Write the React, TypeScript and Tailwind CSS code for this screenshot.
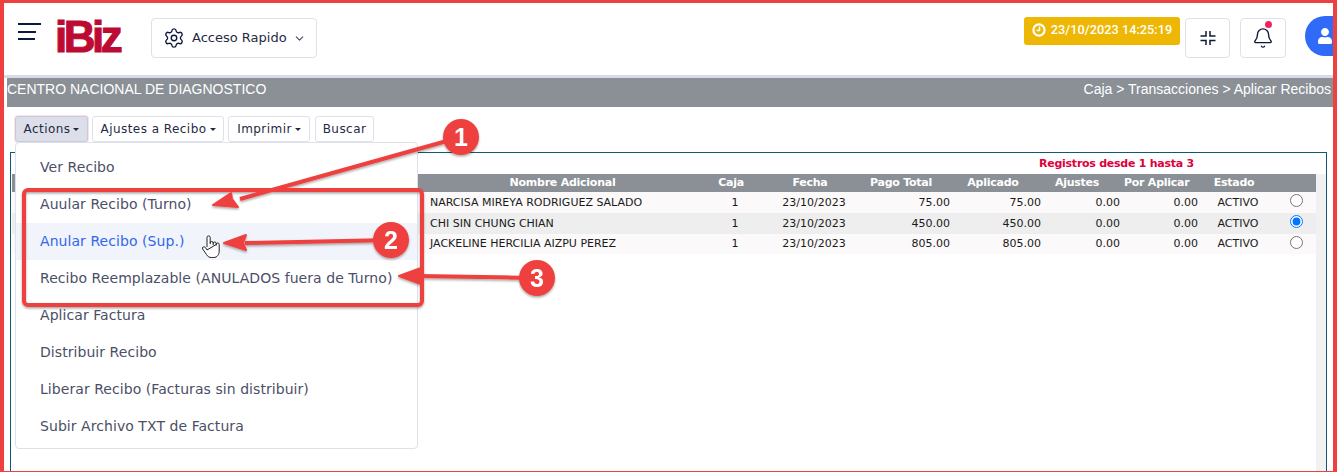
import { Bell, ChevronDown, Settings } from 'lucide-react';
import { FaUser } from 'react-icons/fa';

const menuItems = [
  'Ver Recibo',
  'Auular Recibo (Turno)',
  'Anular Recibo (Sup.)',
  'Recibo Reemplazable (ANULADOS fuera de Turno)',
  'Aplicar Factura',
  'Distribuir Recibo',
  'Liberar Recibo (Facturas sin distribuir)',
  'Subir Archivo TXT de Factura',
];

const rows = [
  { name: 'NARCISA MIREYA RODRIGUEZ SALADO', total: '75.00', checked: false, bg: 'bg-[#fbf9f9]', h: 'h-[21px]' },
  { name: 'CHI SIN CHUNG CHIAN', total: '450.00', checked: true, bg: 'bg-[#eeeeee]', h: 'h-[20px]' },
  { name: 'JACKELINE HERCILIA AIZPU PEREZ', total: '805.00', checked: false, bg: 'bg-[#fbf9f9]', h: 'h-[20px]' },
];

function Caret() {
  return <span className="ml-[3px] inline-block h-0 w-0 border-x-[3px] border-t-[3px] border-x-transparent border-t-[#1f2a44] align-middle" />;
}

function ToolButton({ label, caret, active, width }: { label: string; caret?: boolean; active?: boolean; width: string }) {
  return (
    <div
      className={`flex h-[26px] items-center justify-center rounded-[3px] border text-[12px] tracking-[0.45px] text-[#1f2a44] ${width} ${
        active ? 'border-[#c6cbdc] bg-[#dcdfea] shadow-[0_0_0_1px_#f8e4ea]' : 'border-[#dfe1ea] bg-white'
      }`}
    >
      {label}
      {caret && <Caret />}
    </div>
  );
}

function Annotations() {
  const red = '#ef4040';
  return (
    <svg className="pointer-events-none absolute inset-0" width="1337" height="472" viewBox="0 0 1337 472">
      <defs>
        <filter id="sh" x="-20%" y="-20%" width="140%" height="140%">
          <feDropShadow dx="0" dy="1.5" stdDeviation="1" floodColor="#000" floodOpacity="0.35" />
        </filter>
      </defs>
      <g filter="url(#sh)">
        <rect x="24" y="190" width="398" height="115" rx="4" fill="none" stroke={red} strokeWidth="4" />
        <path d="M461 137 L240 199" stroke={red} strokeWidth="4" />
        <path d="M213 205 L231 193 L232 199 L238 207 Z" fill={red} stroke={red} strokeWidth="2" strokeLinejoin="round" />
        <path d="M391 240 L245 243" stroke={red} strokeWidth="4" />
        <path d="M224 243 L246 235 L243 243 L246 250 Z" fill={red} stroke={red} strokeWidth="2" strokeLinejoin="round" />
        <path d="M537 278 L418 276" stroke={red} strokeWidth="4" />
        <path d="M399 276 L421 268 L418 276 L421 284 Z" fill={red} stroke={red} strokeWidth="2" strokeLinejoin="round" />
        <circle cx="461" cy="137" r="18" fill={red} />
        <circle cx="391" cy="240" r="18" fill={red} />
        <circle cx="537" cy="278" r="18" fill={red} />
        <text x="461" y="146" textAnchor="middle" fontFamily="Liberation Sans" fontWeight="700" fontSize="25" fill="#fff">1</text>
        <text x="391" y="249" textAnchor="middle" fontFamily="Liberation Sans" fontWeight="700" fontSize="25" fill="#fff">2</text>
        <text x="537" y="287" textAnchor="middle" fontFamily="Liberation Sans" fontWeight="700" fontSize="25" fill="#fff">3</text>
      </g>
      {/* hand cursor */}
      <path
        d="M207 247 V237.5 a1.6 1.6 0 0 1 3.2 0 V244 M210.2 243 a1.5 1.5 0 0 1 3 0 V245 M213.2 243.5 a1.5 1.5 0 0 1 3 0 V245.5 M216.2 244.5 a1.5 1.5 0 0 1 3 0 V251 c0 3.5 -2 6.5 -5.5 6.5 h-2 c-2.5 0 -4 -1 -5.2 -3 l-3.8 -5.5 c-1 -1.8 1.2 -3 2.6 -1.6 L207 250 Z"
        fill="#fff"
        stroke="#222"
        strokeWidth="1"
        strokeLinejoin="round"
      />
    </svg>
  );
}

export default function App() {
  return (
    <div className="relative h-[472px] w-[1337px] overflow-hidden bg-white font-['DejaVu_Sans',sans-serif]">
      {/* header */}
      <div className="flex h-[75px] items-start pl-[18px] pr-[4px]">
        <div className="mt-[23px] flex w-[23px] flex-col gap-[5.5px]">
          <div className="h-[2px] w-[23px] bg-[#0b1a3a]" />
          <div className="h-[2px] w-[18px] bg-[#0b1a3a]" />
          <div className="h-[2px] w-[17px] bg-[#0b1a3a]" />
        </div>
        <div className="ml-[14px] mt-[13px] w-[81px] font-['Liberation_Sans',sans-serif] text-[44px] leading-[48px] font-bold tracking-[-3.5px] text-[#bd0a33] [-webkit-text-stroke:1px_#bd0a33]">
          iBiz
        </div>
        <div className="ml-[15px] mt-[18px] flex h-[40px] w-[166px] items-center rounded-[4px] border border-[#dfe1ea] pl-[11px] text-[13px] text-[#1f2a44]">
          <Settings size={22} strokeWidth={1.5} className="text-[#0b1a3a]" />
          <span className="ml-[7px]">Acceso Rapido</span>
          <ChevronDown size={13} className="ml-[6px] text-[#444c66]" />
        </div>
        <div className="ml-auto mt-[17px] flex h-[28px] w-[156px] items-center justify-center gap-[5px] rounded-[3px] bg-[#eeb703] pb-[2px] font-['Roboto',sans-serif] text-[12.75px] font-medium text-white">
          <svg width="14" height="14" viewBox="0 0 14 14" fill="none" stroke="#fff">
            <circle cx="7" cy="7" r="5.6" strokeWidth="2.2" />
            <path d="M7.5 3.5 V7.5 H4.5" strokeWidth="1.6" />
          </svg>
          23/10/2023 14:25:19
        </div>
        <div className="ml-[5px] mt-[18px] flex h-[40px] w-[45px] items-center justify-center rounded-[4px] border border-[#dfe1ea]">
          <svg width="16" height="16" viewBox="0 0 16 16" fill="none" stroke="#0b1a3a" strokeWidth="1.5">
            <path d="M6 1 V6 H0.5 M10 1 V6 H15.5 M6 15 V10.5 H0.5 M10 15 V10.5 H15.5" />
          </svg>
        </div>
        <div className="relative ml-[10px] mt-[18px] flex h-[40px] w-[46px] items-center justify-center rounded-[4px] border border-[#dfe1ea]">
          <Bell size={22} strokeWidth={1.5} className="text-[#0b1a3a]" />
          <span className="absolute right-[13px] top-[2px] h-[7px] w-[7px] rounded-full bg-[#f0245c]" />
        </div>
        <div className="ml-[19px] mt-[16px] flex h-[40px] w-[28px] shrink-0 items-center overflow-hidden rounded-l-full bg-[#2f6bf6] pl-[12px]">
          <FaUser size={16} className="shrink-0 text-white" />
        </div>
      </div>
      <div className="h-[3px] bg-[#d8dbe6]" />

      {/* breadcrumb bar */}
      <div className="ml-[7px] flex h-[29px] items-start justify-between bg-[#8a9096] pr-[6px] pt-[3px] font-['Liberation_Sans',sans-serif] text-[14px] leading-[16px] text-white">
        <span>CENTRO NACIONAL DE DIAGNOSTICO</span>
        <span>Caja &gt; Transacciones &gt; Aplicar Recibos</span>
      </div>

      {/* toolbar */}
      <div className="ml-[15px] mt-[9px] flex">
        <ToolButton label="Actions" caret active width="w-[73px]" />
        <div className="w-[4px]" />
        <ToolButton label="Ajustes a Recibo" caret width="w-[132px]" />
        <div className="w-[4px]" />
        <ToolButton label="Imprimir" caret width="w-[82px]" />
        <div className="w-[5px]" />
        <ToolButton label="Buscar" width="w-[59px]" />
      </div>

      {/* panel */}
      <div className="ml-[10px] mt-[10px] h-[320px] w-[1317px] border-x border-t border-[#0f5a72] pl-[1px]">
        <div className="h-[21px] pl-[1027px] pt-[4px] text-[11px] leading-[14px] font-bold tracking-[-0.25px] whitespace-nowrap text-[#e0003c]">
          Registros desde 1 hasta 3
        </div>
        <div className="flex h-[298px]">
          <table className="h-fit w-[1304px] table-fixed border-collapse text-[11px] text-[#1a1a1a]">
            <colgroup>
              <col className="w-[416px]" />
              <col className="w-[272px]" />
              <col className="w-[70px]" />
              <col className="w-[88px]" />
              <col className="w-[96px]" />
              <col className="w-[91px]" />
              <col className="w-[79px]" />
              <col className="w-[78px]" />
              <col className="w-[64px]" />
              <col className="w-[50px]" />
            </colgroup>
            <thead>
              <tr className="h-[18px] bg-[#8a9096] text-center leading-[14px] font-bold tracking-[-0.25px] whitespace-nowrap text-white">
                <th />
                <th className="pr-[3px]">Nombre Adicional</th>
                <th className="pr-[8px]">Caja</th>
                <th className="pr-[8px]">Fecha</th>
                <th className="pr-[10px]">Pago Total</th>
                <th className="pr-[13px]">Aplicado</th>
                <th className="pr-[15px]">Ajustes</th>
                <th className="pr-[14px]">Por Aplicar</th>
                <th>Estado</th>
                <th />
              </tr>
            </thead>
            <tbody>
              {rows.map((r) => (
                <tr key={r.name} className={`${r.h} ${r.bg}`}>
                  <td />
                  <td className="pl-[2px] pt-[1px]">{r.name}</td>
                  <td className="pt-[1px] text-center">1</td>
                  <td className="pt-[1px] text-center">23/10/2023</td>
                  <td className="pr-[4px] pt-[1px] text-right">{r.total}</td>
                  <td className="pr-[4px] pt-[1px] text-right">{r.total}</td>
                  <td className="pr-[4px] pt-[1px] text-right">0.00</td>
                  <td className="pr-[4px] pt-[1px] text-right">0.00</td>
                  <td className="pl-[8px] pt-[1px] text-center">ACTIVO</td>
                  <td className="pl-[10px] text-center align-top">
                    <input type="radio" readOnly checked={r.checked} className="m-0 mt-[2px] h-[13px] w-[13px] accent-[#0075ff]" />
                  </td>
                </tr>
              ))}
            </tbody>
          </table>
          <div className="flex-1 bg-[#f1f1f1]" />
        </div>
      </div>

      {/* dropdown */}
      <div className="absolute left-[15px] top-[142px] h-[307px] w-[403px] rounded-[4px] border border-[#dfe1ea] bg-white py-[6px] text-[14px] tracking-[0.06px] text-[#4b4f66]">
        {menuItems.map((item) => (
          <div
            key={item}
            className={`flex h-[37px] items-center pl-[24px] ${
              item === 'Anular Recibo (Sup.)' ? 'bg-[#f1f4fb] text-[#3366ee]' : ''
            }`}
          >
            {item}
          </div>
        ))}
      </div>

      <Annotations />

      {/* screenshot frame */}
      <div className="pointer-events-none absolute inset-0 border-x-[4px] border-t-[3px] border-b-[1px] border-[#ef4040]" />
    </div>
  );
}
